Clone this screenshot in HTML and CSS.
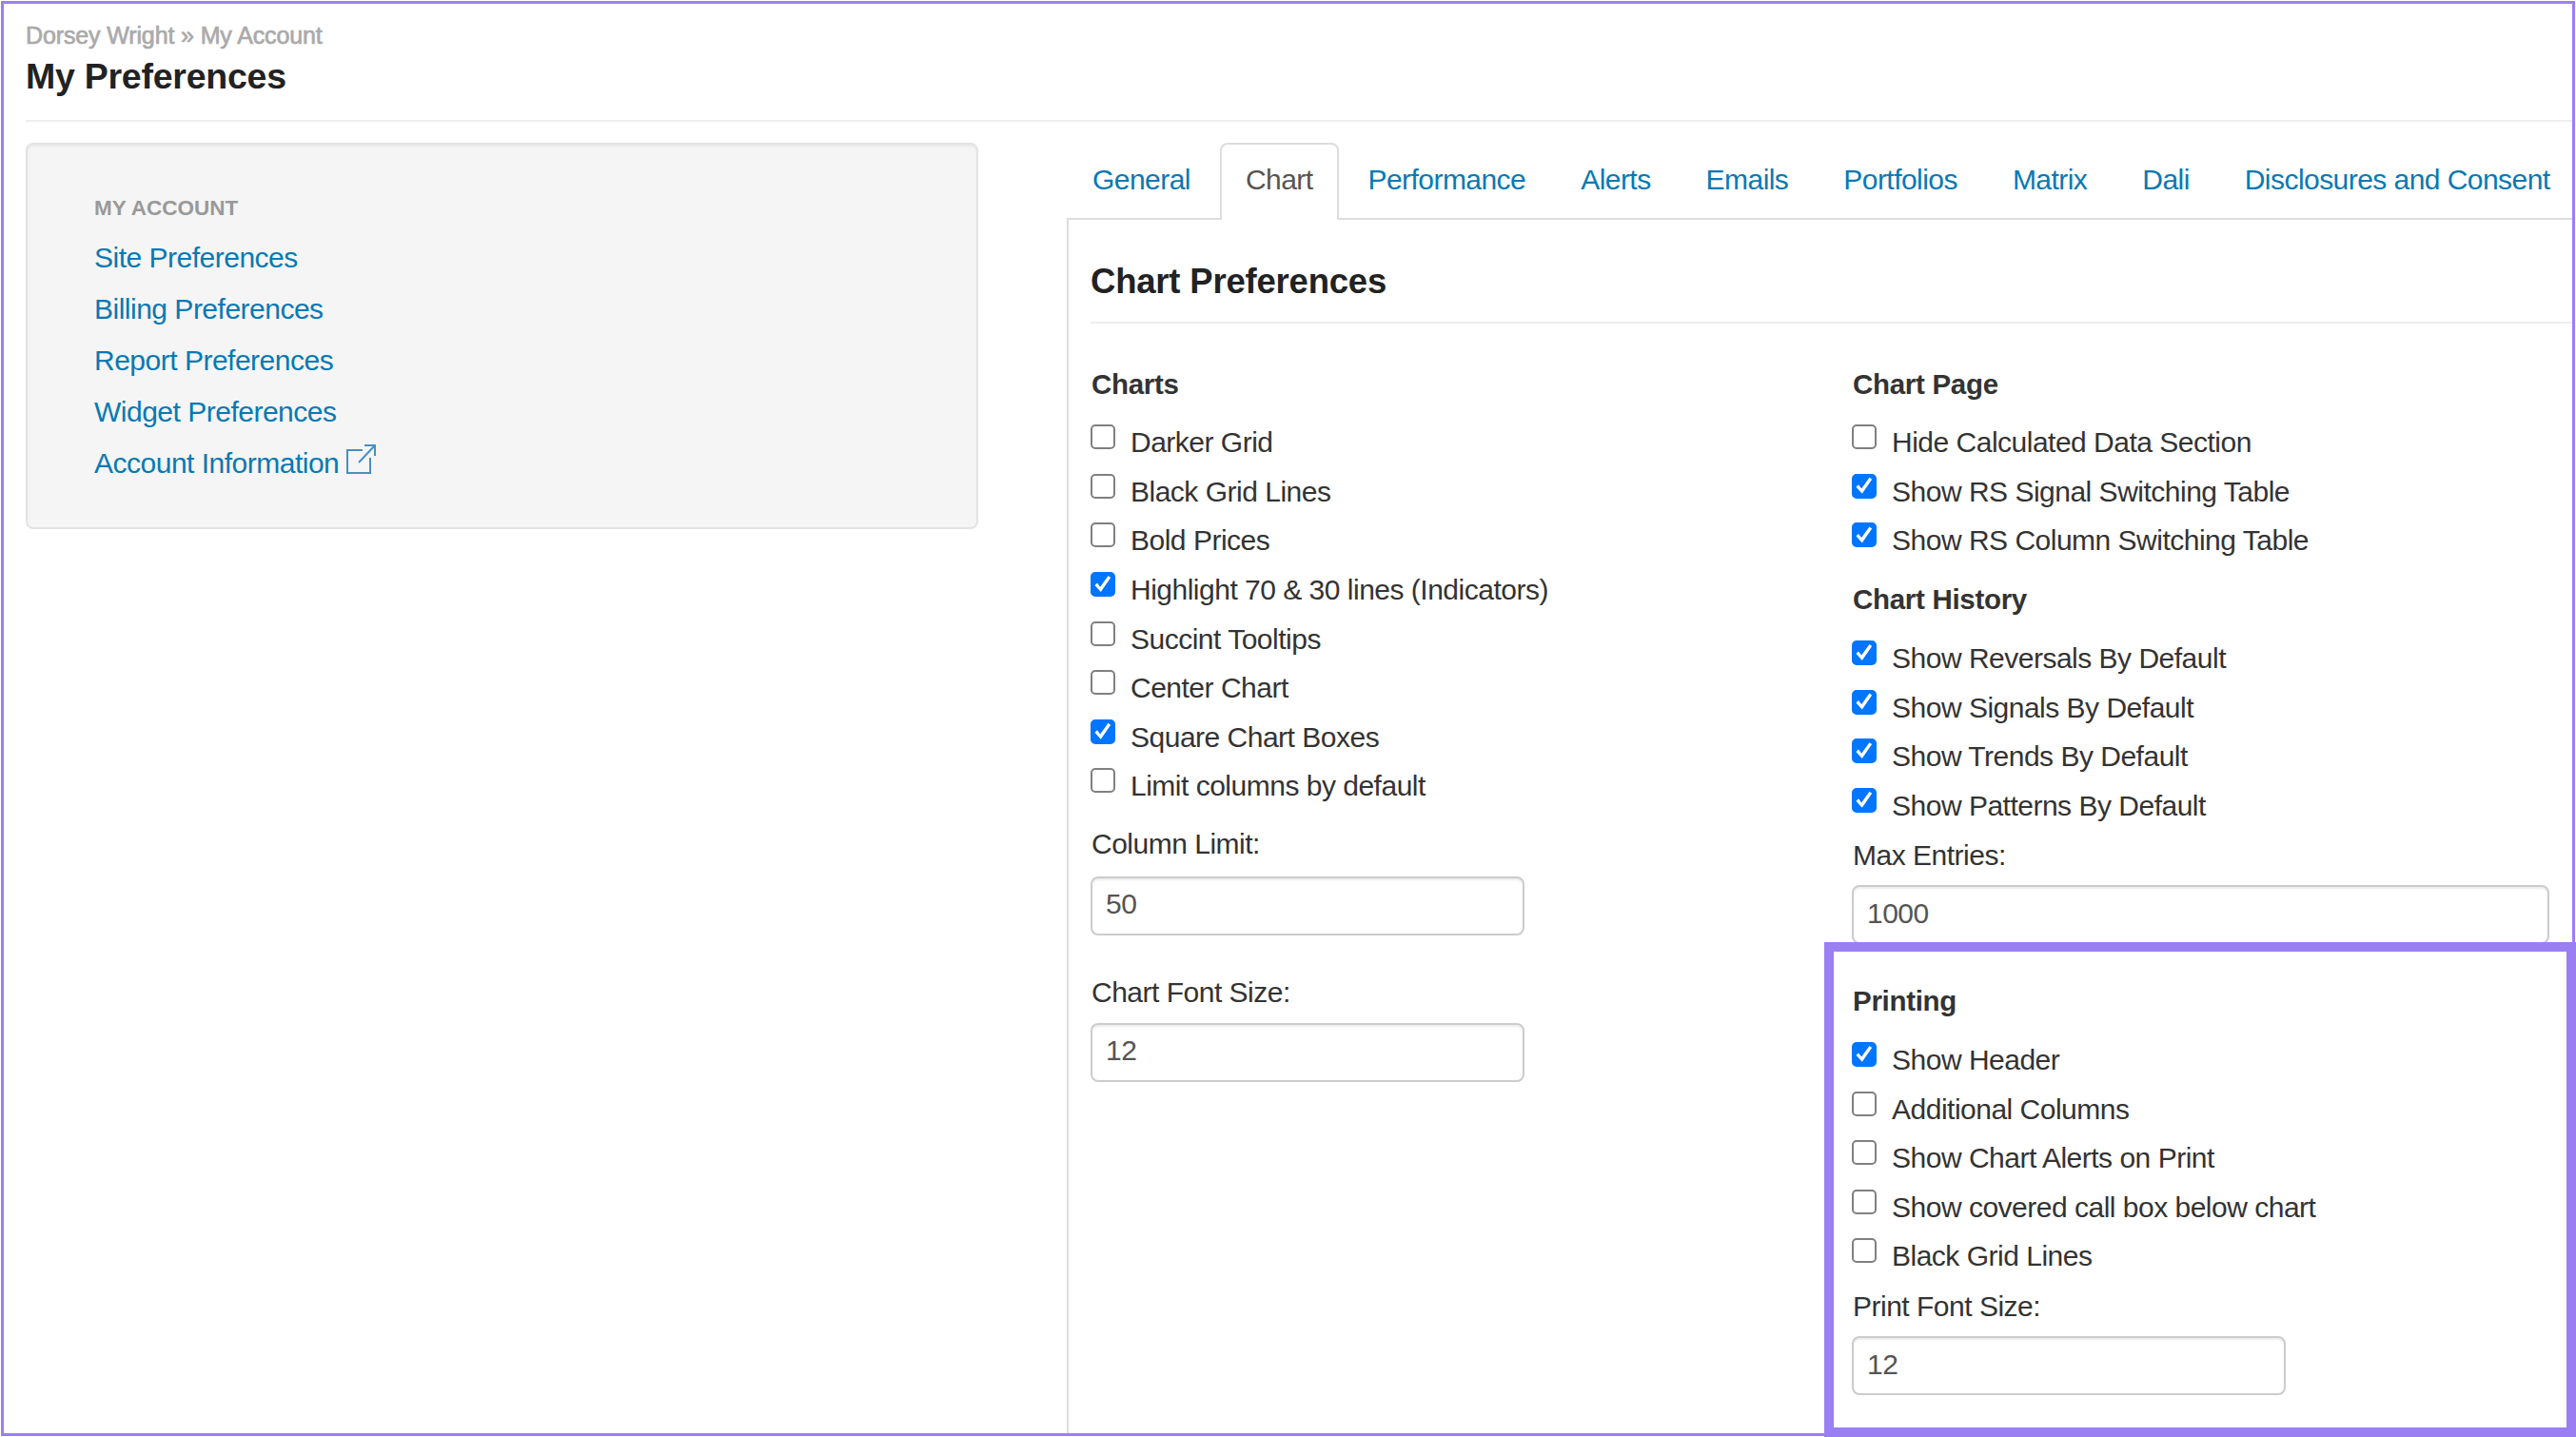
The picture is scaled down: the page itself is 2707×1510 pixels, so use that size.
FILE: index.html
```
<!DOCTYPE html>
<html lang="en">

<head>
  <meta charset="UTF-8">
  <title>My Preferences</title>
  <link rel="stylesheet" href="styles.css">
</head>

<body>
  <div class="page">
    <header class="page-header">
      <div class="breadcrumb">Dorsey Wright » My Account</div>
      <h1>My Preferences</h1>
    </header>

    <div class="columns">
      <nav class="well">
        <h6>MY ACCOUNT</h6>
        <a>Site Preferences</a>
        <a>Billing Preferences</a>
        <a>Report Preferences</a>
        <a>Widget Preferences</a>
        <a>Account Information<svg class="external" width="34" height="34" viewBox="0 0 34 34">
            <path d="M18 7H2v24h24V15M14 20L31 2M20 2h11v11" />
          </svg></a>
      </nav>

      <main>
        <ul class="tabs">
          <li>General</li>
          <li class="active">Chart</li>
          <li>Performance</li>
          <li>Alerts</li>
          <li>Emails</li>
          <li>Portfolios</li>
          <li>Matrix</li>
          <li>Dali</li>
          <li>Disclosures and Consent</li>
        </ul>

        <div class="tab-content">
          <h2>Chart Preferences</h2>
          <form class="prefs">
            <div class="col">
              <h5>Charts</h5>
              <label class="check"><input type="checkbox">Darker Grid</label>
              <label class="check"><input type="checkbox">Black Grid Lines</label>
              <label class="check"><input type="checkbox">Bold Prices</label>
              <label class="check"><input type="checkbox" checked>Highlight 70 &amp; 30 lines (Indicators)</label>
              <label class="check"><input type="checkbox">Succint Tooltips</label>
              <label class="check"><input type="checkbox">Center Chart</label>
              <label class="check"><input type="checkbox" checked>Square Chart Boxes</label>
              <label class="check"><input type="checkbox">Limit columns by default</label>
              <label class="field column-limit">Column Limit:
                <input type="text" value="50"></label>
              <label class="field">Chart Font Size:
                <input type="text" value="12"></label>
            </div>

            <div class="col">
              <h5>Chart Page</h5>
              <label class="check"><input type="checkbox">Hide Calculated Data Section</label>
              <label class="check"><input type="checkbox" checked>Show RS Signal Switching Table</label>
              <label class="check"><input type="checkbox" checked>Show RS Column Switching Table</label>

              <h5 class="history">Chart History</h5>
              <label class="check"><input type="checkbox" checked>Show Reversals By Default</label>
              <label class="check"><input type="checkbox" checked>Show Signals By Default</label>
              <label class="check"><input type="checkbox" checked>Show Trends By Default</label>
              <label class="check"><input type="checkbox" checked>Show Patterns By Default</label>
              <label class="field wide">Max Entries:
                <input type="text" value="1000"></label>

              <h5>Printing</h5>
              <label class="check"><input type="checkbox" checked>Show Header</label>
              <label class="check"><input type="checkbox">Additional Columns</label>
              <label class="check"><input type="checkbox">Show Chart Alerts on Print</label>
              <label class="check"><input type="checkbox">Show covered call box below chart</label>
              <label class="check"><input type="checkbox">Black Grid Lines</label>
              <label class="field">Print Font Size:
                <input type="text" value="12"></label>
            </div>
          </form>
        </div>
      </main>
    </div>
  </div>

  <div class="highlight"></div>
</body>

</html>
```
FILE: styles.css
```
:root {
  --purple: #9a7ff3;
  --link: #0779b4;
  --text: #333;
  --border: #ddd;
}

* {
  box-sizing: border-box;
}

body {
  margin: 0;
  position: relative;
  width: 2707px;
  height: 1510px;
  padding: 1px;
  overflow: hidden;
  background: #fff;
  color: var(--text);
  font: 30px/40px "Liberation Sans", Arial, sans-serif;
  letter-spacing: -0.5px;
}

h1, h2, h5, h6 {
  margin: 0;
}

.page {
  display: flex;
  flex-direction: column;
  width: 2705px;
  height: 1508px;
  border: 3px solid var(--purple);
  padding-left: 23px;
}

.page-header {
  height: 124px;
  padding-top: 18px;
  border-bottom: 2px solid #eee;
}

.breadcrumb {
  color: #aaa;
  font-size: 25px;
  line-height: 30px;
  letter-spacing: -0.13px;
  -webkit-text-stroke: 0.7px #aaa;
}

h1 {
  color: #222;
  font-size: 37.5px;
  line-height: 44px;
  letter-spacing: -0.25px;
  margin-top: 6px;
}

.columns {
  flex: 1;
  display: flex;
  align-items: flex-start;
  gap: 93px;
  padding-top: 22px;
}

.well {
  flex: none;
  display: flex;
  flex-direction: column;
  width: 1001px;
  height: 406px;
  padding: 47px 70px 0;
  background: #f5f5f5;
  border: 2px solid #e3e3e3;
  border-radius: 8px;
  box-shadow: inset 0 2px 2px rgba(0, 0, 0, .05);
}

.well h6 {
  color: #999;
  font-size: 22.5px;
  line-height: 40px;
  letter-spacing: 0;
  margin-bottom: 5px;
}

.well a {
  color: var(--link);
  line-height: 54px;
}

.external {
  margin-left: 7px;
  height: 34px;
  vertical-align: -3px;
  fill: none;
  stroke: #4a8fc0;
  stroke-width: 2;
}

main {
  flex: 1;
  min-width: 0;
  align-self: stretch;
  display: flex;
  flex-direction: column;
}

.tabs {
  display: flex;
  gap: 4px;
  height: 81px;
  margin: 0;
  padding: 0;
  border-bottom: 2px solid var(--border);
  list-style: none;
  color: var(--link);
  letter-spacing: -0.55px;
}

.tabs li {
  height: 81px;
  padding: 17px 25px 0;
  border: 2px solid transparent;
  border-bottom: none;
  border-radius: 8px 8px 0 0;
  white-space: nowrap;
}

.tabs .active {
  color: #555;
  background: #fff;
  border-color: var(--border);
}

.tab-content {
  flex: 1;
  padding-left: 23px;
  border-left: 2px solid var(--border);
}

h2 {
  height: 109px;
  padding-top: 43px;
  border-bottom: 2px solid #eee;
  color: #222;
  font-size: 36.5px;
  line-height: 44px;
  letter-spacing: -0.2px;
}

.prefs {
  display: flex;
  gap: 67px;
  padding-top: 43.9px;
}

.col {
  flex: none;
  width: 733px;
}

h5 {
  font-size: 29.5px;
  line-height: 40px;
  letter-spacing: -0.3px;
  margin-bottom: 15.5px;
  padding-left: 1px;
}

.history {
  margin-top: 16.4px;
}

.check {
  display: flex;
  gap: 16px;
  line-height: 51.6px;
}

.check input {
  appearance: none;
  width: 26px;
  height: 26px;
  margin: 7px 0 0;
  border: 2px solid #808080;
  border-radius: 5px;
  background: #fff;
}

.check input:checked {
  background: #0075ff;
  border-color: #0075ff;
}

.check input:checked::before {
  content: "";
  display: block;
  width: 22px;
  height: 22px;
  background: #fff;
  clip-path: polygon(11% 54%, 23% 43%, 37% 62%, 75% 9%, 87% 18%, 40% 86%);
}

.field {
  display: block;
  margin: 6.6px 0 40px;
  padding-left: 1px;
}

.column-limit {
  margin-top: 15px;
}

.field input {
  display: block;
  width: 456px;
  height: 62px;
  margin: 11.5px 0 0 -1px;
  padding: 0 14px 3px;
  border: 2px solid #ccc;
  border-radius: 8px;
  box-shadow: inset 0 2px 2px rgba(0, 0, 0, .075);
  background: #fff;
  color: #555;
  font: inherit;
  letter-spacing: inherit;
}

.column-limit input {
  margin-top: 14px;
  padding-bottom: 5px;
}

.wide input {
  width: 733px;
}

/* callout frame around the Printing section */
.highlight {
  position: absolute;
  left: 1917px;
  top: 990px;
  width: 790px;
  height: 520px;
  border: 10px solid var(--purple);
}
```
